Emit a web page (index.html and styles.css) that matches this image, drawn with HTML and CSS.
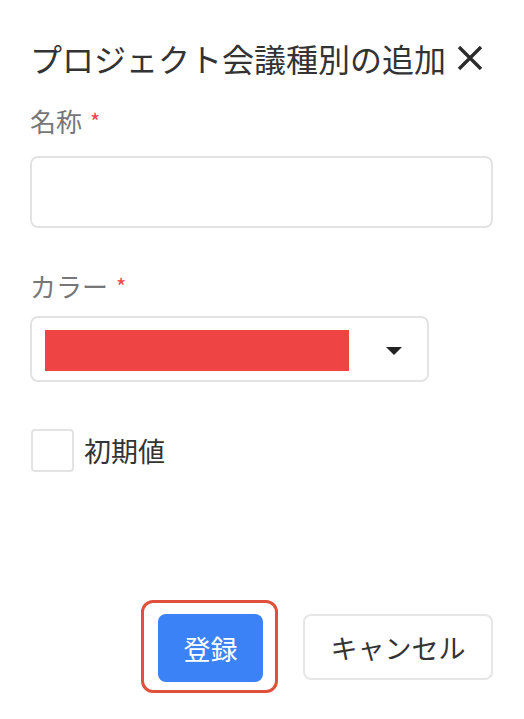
FILE: index.html
```html
<!DOCTYPE html>
<html lang="ja">
<head>
  <meta charset="UTF-8">
  <title>プロジェクト会議種別の追加</title>
  <link rel="stylesheet" href="styles.css">
</head>
<body>

  <div class="dialog">
    <div class="dialog-header">
      <h1 class="dialog-title">プロジェクト会議種別の追加</h1>
      <button class="close" aria-label="閉じる">
        <svg width="26" height="24" viewBox="0 0 26 24">
          <path d="M2 1 L24 23 M24 1 L2 23" stroke="#2b2b2b" stroke-width="3.4" stroke-linecap="butt"/>
        </svg>
      </button>
    </div>

    <label class="field-label">名称<span class="required">*</span></label>
    <input class="text-input" type="text">

    <label class="field-label color-label">カラー<span class="required">*</span></label>
    <div class="color-select">
      <div class="swatch"></div>
      <span class="caret"></span>
    </div>

    <div class="check-row">
      <span class="checkbox"></span>
      <span class="check-label">初期値</span>
    </div>

    <div class="actions">
      <span class="highlight">
        <button class="btn btn-primary">登録</button>
      </span>
      <button class="btn btn-default">キャンセル</button>
    </div>
  </div>

</body>
</html>
```

FILE: styles.css
```css
body {
  margin: 0;
  padding: 0;
  background-color: #fff;
  font-family: "Noto Sans CJK JP", "Noto Sans", sans-serif;
  color: #333;
}

.dialog {
  width: 463px;
  padding: 38px 31px 0 30px;
}

.dialog-header {
  display: flex;
  align-items: center;
  height: 40px;
}

.dialog-title {
  margin: 0;
  font-size: 32px;
  font-weight: normal;
  line-height: 40px;
  color: #333;
}

.close {
  margin-left: 11px;
  padding: 0;
  border: none;
  background: none;
  display: flex;
  cursor: pointer;
}

.field-label {
  display: block;
  margin-top: 24px;
  font-size: 26px;
  line-height: 36px;
  color: #777;
}

.color-label {
  margin-top: 39px;
}

.required {
  color: #ef4444;
  font-size: 22px;
  margin-left: 8px;
  vertical-align: 2px;
}

.text-input {
  display: block;
  box-sizing: border-box;
  width: 463px;
  height: 72px;
  margin-top: 17px;
  border: 2px solid #e3e3e3;
  border-radius: 8px;
  outline: none;
  font-size: 24px;
}

.color-select {
  box-sizing: border-box;
  width: 399px;
  height: 66px;
  margin-top: 12px;
  padding: 12px 0 0 13px;
  border: 2px solid #e3e3e3;
  border-radius: 8px;
  display: flex;
  align-items: flex-start;
}

.swatch {
  width: 304px;
  height: 41px;
  background-color: #ef4444;
}

.caret {
  margin: 17px 0 0 37px;
  width: 0;
  height: 0;
  border-left: 8px solid transparent;
  border-right: 8px solid transparent;
  border-top: 8px solid #222;
}

.check-row {
  display: flex;
  align-items: center;
  margin-top: 47px;
}

.checkbox {
  box-sizing: border-box;
  width: 43px;
  height: 43px;
  border: 2px solid #e3e3e3;
  border-radius: 4px;
  margin-left: 1px;
}

.check-label {
  margin-left: 10px;
  font-size: 27px;
  line-height: 36px;
  color: #333;
}

.actions {
  display: flex;
  justify-content: flex-end;
  align-items: flex-start;
  gap: 25px;
  margin-top: 128px;
}

.highlight {
  display: flex;
  padding: 11px 12px 8px 14px;
  border: 3px solid #e0513b;
  border-radius: 12px;
}

.btn {
  font-family: inherit;
  font-size: 27px;
  padding: 0;
  border-radius: 8px;
  cursor: pointer;
}

.btn-primary {
  width: 105px;
  height: 68px;
  border: none;
  background-color: #3b82f6;
  color: #fff;
}

.btn-default {
  box-sizing: border-box;
  width: 190px;
  height: 66px;
  margin-top: 14px;
  border: 2px solid #e6e6e6;
  background-color: #fff;
  color: #333;
}
```
